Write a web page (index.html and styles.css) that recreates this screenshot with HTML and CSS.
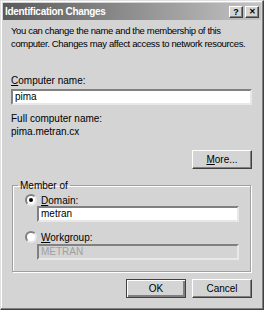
FILE: index.html
```html
<!DOCTYPE html>
<html lang="en">
<head>
    <meta charset="UTF-8">
    <title>Identification Changes</title>
    <link rel="stylesheet" href="styles.css">
</head>
<body>

    <div class="window">
        <!-- Title bar -->
        <div class="titlebar">
            <span class="title">Identification Changes</span>
            <span class="tb-btn">?</span>
            <span class="tb-btn close">&#x2715;</span>
        </div>

        <div class="content">
            <p class="intro">You can change the name and the membership of this<br>computer. Changes may affect access to network resources.</p>

            <label class="field-label"><u>C</u>omputer name:</label>
            <div class="textbox">pima</div>

            <p class="full-label">Full computer name:</p>
            <p class="full-name">pima.metran.cx</p>

            <div class="more-row">
                <button class="btn"><u>M</u>ore...</button>
            </div>

            <!-- Member of -->
            <fieldset class="group">
                <legend>Member of</legend>
                <div class="radio-row">
                    <span class="radio checked"></span>
                    <span><u>D</u>omain:</span>
                </div>
                <div class="textbox small">metran</div>
                <div class="radio-row second">
                    <span class="radio"></span>
                    <span><u>W</u>orkgroup:</span>
                </div>
                <div class="textbox small disabled">METRAN</div>
            </fieldset>

            <div class="buttons">
                <button class="btn default">OK</button>
                <button class="btn">Cancel</button>
            </div>
        </div>
    </div>

</body>
</html>
```

FILE: styles.css
```css
/* General Styles */
body {
    margin: 0;
    padding: 0;
    font-family: "Liberation Sans", Arial, sans-serif;
    font-size: 10px;
    color: #000;
    background-color: #d4d4d4;
}

.window {
    width: 264px;
    height: 310px;
    box-sizing: border-box;
    background-color: #d4d4d4;
    border: 1px solid;
    border-color: #e0e0e0 #404040 #404040 #e0e0e0;
    box-shadow: inset -1px -1px 0 #808080, inset 1px 1px 0 #ffffff;
    padding: 2px 2px 2px 2px;
}

/* Title bar */
.titlebar {
    height: 17px;
    display: flex;
    align-items: center;
    padding: 0 2px 0 2px;
    background: linear-gradient(to right, #5a5a5a, #c4c4c4);
}

.title {
    flex: 1;
    color: #fff;
    font-family: "Liberation Sans", Arial, sans-serif;
    font-weight: bold;
    font-size: 10px;
    letter-spacing: -0.3px;
}

.tb-btn {
    width: 14px;
    height: 12px;
    margin-left: 2px;
    box-sizing: border-box;
    background-color: #d4d4d4;
    border: 1px solid;
    border-color: #fff #404040 #404040 #fff;
    box-shadow: inset -1px -1px 0 #808080;
    font-size: 9px;
    font-weight: bold;
    line-height: 10px;
    text-align: center;
}

.tb-btn.close {
    font-size: 8px;
}

/* Content */
.content {
    padding: 4px 9px 0 8px;
}

.intro {
    margin: 0 0 24px 0;
    line-height: 13px;
    white-space: nowrap;
    font-size: 9.5px;
    letter-spacing: -0.35px;
}

.field-label {
    display: block;
    line-height: 13px;
    margin-bottom: 2px;
}

.textbox {
    height: 16px;
    box-sizing: border-box;
    background-color: #fff;
    border: 2px solid;
    border-color: #808080 #e8e8e8 #e8e8e8 #808080;
    padding-left: 2px;
    line-height: 12px;
}

.textbox.disabled {
    background-color: #d4d4d4;
    color: #a0a0a0;
}

.full-label {
    margin: 7px 0 0 0;
    line-height: 13px;
}

.full-name {
    margin: 0;
    line-height: 13px;
}

.more-row {
    display: flex;
    justify-content: flex-end;
    margin-top: 12px;
}

.btn {
    width: 60px;
    height: 19px;
    padding: 0;
    font-family: "Liberation Sans", Arial, sans-serif;
    font-size: 10px;
    color: #000;
    background-color: #d4d4d4;
    border: 1px solid;
    border-color: #fff #404040 #404040 #fff;
    box-shadow: inset -1px -1px 0 #808080;
}

.btn.default {
    border-color: #404040;
    box-shadow: inset 1px 1px 0 #fff, inset -2px -2px 0 #808080;
}

/* Group box */
.group {
    margin: 10px 1px 0 1px;
    padding: 2px 11px 11px 12px;
    border: 1px solid #a0a0a0;
    box-shadow: inset 1px 1px 0 #fff, 1px 1px 0 #fff;
}

.group legend {
    padding: 0 2px;
    margin-left: -7px;
    line-height: 13px;
}

.radio-row {
    display: flex;
    align-items: center;
    gap: 4px;
    height: 12px;
}

.radio-row.second {
    margin-top: 9px;
}

.radio {
    width: 8px;
    height: 8px;
    border-radius: 50%;
    background-color: #fff;
    border: 2px solid;
    border-color: #808080 #e8e8e8 #e8e8e8 #808080;
    position: relative;
}

.radio.checked::after {
    content: "";
    position: absolute;
    left: 2px;
    top: 2px;
    width: 4px;
    height: 4px;
    border-radius: 50%;
    background-color: #000;
}

.textbox.small {
    margin-left: 12px;
}

.textbox.small.disabled {
    margin-top: 1px;
}

.buttons {
    display: flex;
    justify-content: flex-end;
    gap: 6px;
    margin-top: 7px;
}
```
